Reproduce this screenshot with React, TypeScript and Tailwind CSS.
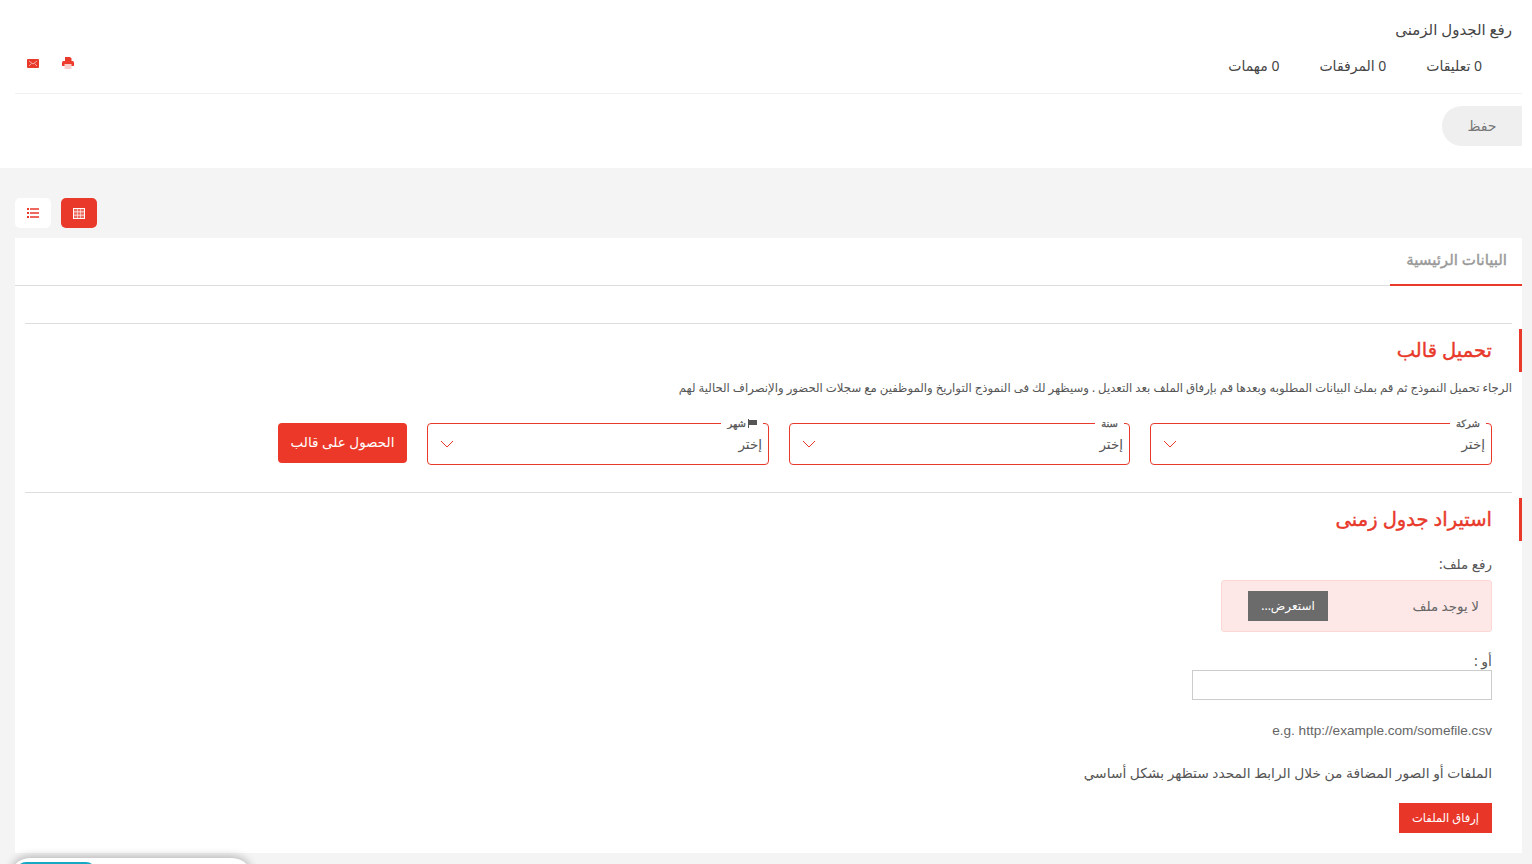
const SELECTS = [
  { label: 'شركة', flag: false, width: 'w-[342px]' },
  { label: 'سنة', flag: false, width: 'w-[341px]' },
  { label: 'شهر', flag: true, width: 'w-[342px]' },
];

function EnvelopeIcon() {
  return (
    <svg viewBox="0 0 12 9" className="h-[9px] w-[12px]">
      <rect width="12" height="9" rx="1" fill="#e8392b" />
      <path d="M2 2l4 3 4-3M2 7l2.5-2.5M10 7L7.5 4.500" fill="none" stroke="#fff" strokeOpacity="0.7" strokeWidth="0.8" />
    </svg>
  );
}

function PrinterIcon() {
  return (
    <svg viewBox="0 0 12 12" className="h-[12px] w-[12px]">
      <path d="M3 0h5l1.500 1.500V4h-6.500z" fill="#e8392b" />
      <path d="M1.500 4h9A1.500 1.500 0 0 1 12 5.500V9H0V5.500A1.500 1.500 0 0 1 1.500 4z" fill="#ee3d2f" />
      <rect x="2.500" y="7" width="7" height="5" fill="#fbcfcb" />
    </svg>
  );
}

function TableIcon() {
  return (
    <svg viewBox="0 0 12 11" className="h-[11px] w-[12px]">
      <rect width="12" height="11" fill="#fff" />
      <path d="M1 1h3v2.500H1zM4.500 1h3v2.500h-3zM8 1h3v2.500H8zM1 4.200h3v2.500H1zM4.500 4.200h3v2.500h-3zM8 4.200h3v2.500H8zM1 7.400h3v2.600H1zM4.500 7.400h3v2.600h-3zM8 7.400h3v2.600H8z" fill="#ef6a5e" />
    </svg>
  );
}

function ListIcon() {
  return (
    <svg viewBox="0 0 12 10" className="h-[10px] w-[12px]">
      <path d="M0 0h2v2H0zM0 4h2v2H0zM0 8h2v2H0z" fill="#e8392b" />
      <path d="M3 0.200h9v1.500H3zM3 4.200h9v1.500H3zM3 8.200h9v1.500H3z" fill="#e8392b" />
    </svg>
  );
}

function SelectBox({ label, flag, width }: { label: string; flag: boolean; width: string }) {
  return (
    <fieldset className={`-mt-[6px] h-[48px] ${width} rounded-[4px] border border-[#e8392b] pr-[6px] pl-[12px]`}>
      <legend className="-mr-[1px] flex h-[12px] items-center gap-[2px] px-[6px] text-[10px] leading-[12px] text-[#555] [-webkit-text-stroke:0.3px]">
        {flag && (
          <svg viewBox="0 0 9 9" className="h-[9px] w-[9px]">
            <path d="M0 0h1v9H0zM1 1h8v5H1z" fill="#555" />
          </svg>
        )}
        {label}
      </legend>
      <div className="flex h-[30px] items-center justify-between">
        <span className="text-[13.500px] text-[#555]">إختر</span>
        <svg viewBox="0 0 14 8" className="h-[8px] w-[14px]">
          <path d="M1 1l6 6 6-6" fill="none" stroke="#e8392b" strokeWidth="1" />
        </svg>
      </div>
    </fieldset>
  );
}

function SectionTitle({ children }: { children: string }) {
  return (
    <div className="mt-[5px] flex h-[43px] items-center border-r-[3px] border-[#e8392b] pb-[2px] pr-[27px]">
      <h2 className="text-[19.500px] font-normal text-[#e8392b] [-webkit-text-stroke:0.4px]">{children}</h2>
    </div>
  );
}

export default function App() {
  return (
    <div
      dir="rtl"
      className="relative h-[864px] overflow-hidden bg-[#f4f4f4] font-['Noto_Sans','DejaVu_Sans',sans-serif] text-[#555]"
    >
      {/* Header */}
      <div className="h-[168px] bg-white">
        <div className="mx-[10px] ml-[15px] h-[94px] border-b border-[#f1f1f1]">
          <h1 className="h-[47px] pr-[10px] pt-[17px] text-[15px] font-normal leading-[24px] text-[#444]">رفع الجدول الزمنى</h1>
          <div className="flex items-center justify-between pl-[12px] pr-[40px] pt-[9px]">
            <div className="flex gap-[40px] text-[14px] leading-[20px] text-[#444]">
              <span>0 تعليقات</span>
              <span>0 المرفقات</span>
              <span>0 مهمات</span>
            </div>
            <div className="flex items-center gap-[23px] pb-[6px]">
              <PrinterIcon />
              <EnvelopeIcon />
            </div>
          </div>
        </div>
        <div className="pt-[12px] pr-[10px]">
          <button className="flex h-[40px] w-[80px] items-center justify-center rounded-l-full bg-[#efefef] pb-[2px] text-[14px] text-[#777]">
            حفظ
          </button>
        </div>
      </div>

      {/* View toggles */}
      <div className="flex h-[70px] items-start justify-end gap-[10px] pl-[15px] pt-[30px]">
        <button className="flex h-[30px] w-[36px] items-center justify-center rounded-[5px] bg-[#e8392b]">
          <TableIcon />
        </button>
        <button className="flex h-[30px] w-[36px] items-center justify-center rounded-[5px] bg-white">
          <ListIcon />
        </button>
      </div>

      {/* Main card */}
      <div className="mr-[10px] ml-[15px] h-[615px] bg-white">
        <div className="flex h-[48px] border-b border-[#ddd]">
          <div className="h-[48px] w-[132px] whitespace-nowrap border-b-2 border-[#e8392b] pr-[15px] pt-[7px] text-[15px] leading-[28px] text-[#999] [-webkit-text-stroke:0.4px]">
            البيانات الرئيسية
          </div>
        </div>

        <div className="mx-[10px] mt-[37px] border-t border-[#ddd]" />
        <SectionTitle>تحميل قالب</SectionTitle>
        <p className="mt-[6px] pr-[10px] text-[11.700px] leading-[18px] text-[#555]">
          الرجاء تحميل النموذج ثم قم بملئ البيانات المطلوبه وبعدها قم بإرفاق الملف بعد التعديل . وسيظهر لك فى النموذج التواريخ والموظفين مع سجلات الحضور والإنصراف الحالية لهم
        </p>
        <div className="mt-[27px] flex gap-[20px] pr-[30px]">
          {SELECTS.map((s) => (
            <SelectBox key={s.label} label={s.label} flag={s.flag} width={s.width} />
          ))}
          <button className="h-[40px] w-[129px] rounded-[4px] bg-[#ec3828] pb-[2px] text-[13.500px] text-white">الحصول على قالب</button>
        </div>

        <div className="mx-[10px] mt-[27px] border-t border-[#ddd]" />
        <SectionTitle>استيراد جدول زمنى</SectionTitle>

        <div className="pr-[30px]">
          <label className="mt-[13px] block text-[13.500px] leading-[20px] text-[#555]">رفع ملف:</label>
          <div className="mt-[6px] flex h-[52px] w-[271px] items-center justify-between rounded-[3px] border border-[#fbd8d5] bg-[#fde8e7] pl-[26px] pr-[12px]">
            <span className="text-[13.500px] text-[#666]">لا يوجد ملف</span>
            <button className="h-[30px] w-[80px] bg-[#6b6b6b] text-[12px] text-white">استعرض...</button>
          </div>
          <label className="mt-[19px] block text-[14px] leading-[20px] text-[#555]">أو :</label>
          <input className="-mt-[1px] block h-[30px] w-[300px] border border-[#ccc] bg-white" />
          <p dir="ltr" className="mt-[22px] text-right font-['Liberation_Sans',sans-serif] text-[13.600px] leading-[18px] text-[#666]">
            e.g. http://example.com/somefile.csv
          </p>
          <p className="mt-[23px] text-[13.800px] leading-[20px] text-[#555]">
            الملفات أو الصور المضافة من خلال الرابط المحدد ستظهر بشكل أساسي
          </p>
          <button className="mt-[20px] h-[30px] w-[93px] bg-[#e83628] text-[11.500px] text-white">إرفاق الملفات</button>
        </div>
      </div>

      {/* Bottom widget */}
      <div className="absolute bottom-[-30px] left-[10px] h-[36px] w-[242px] rounded-t-[20px] bg-white pl-[6px] pt-[4px] shadow-[0_-2px_8px_rgba(0,0,0,0.25)]">
        <div className="mr-auto h-[30px] w-[80px] rounded-t-[10px] bg-[#17a9c4]" />
      </div>
    </div>
  );
}
